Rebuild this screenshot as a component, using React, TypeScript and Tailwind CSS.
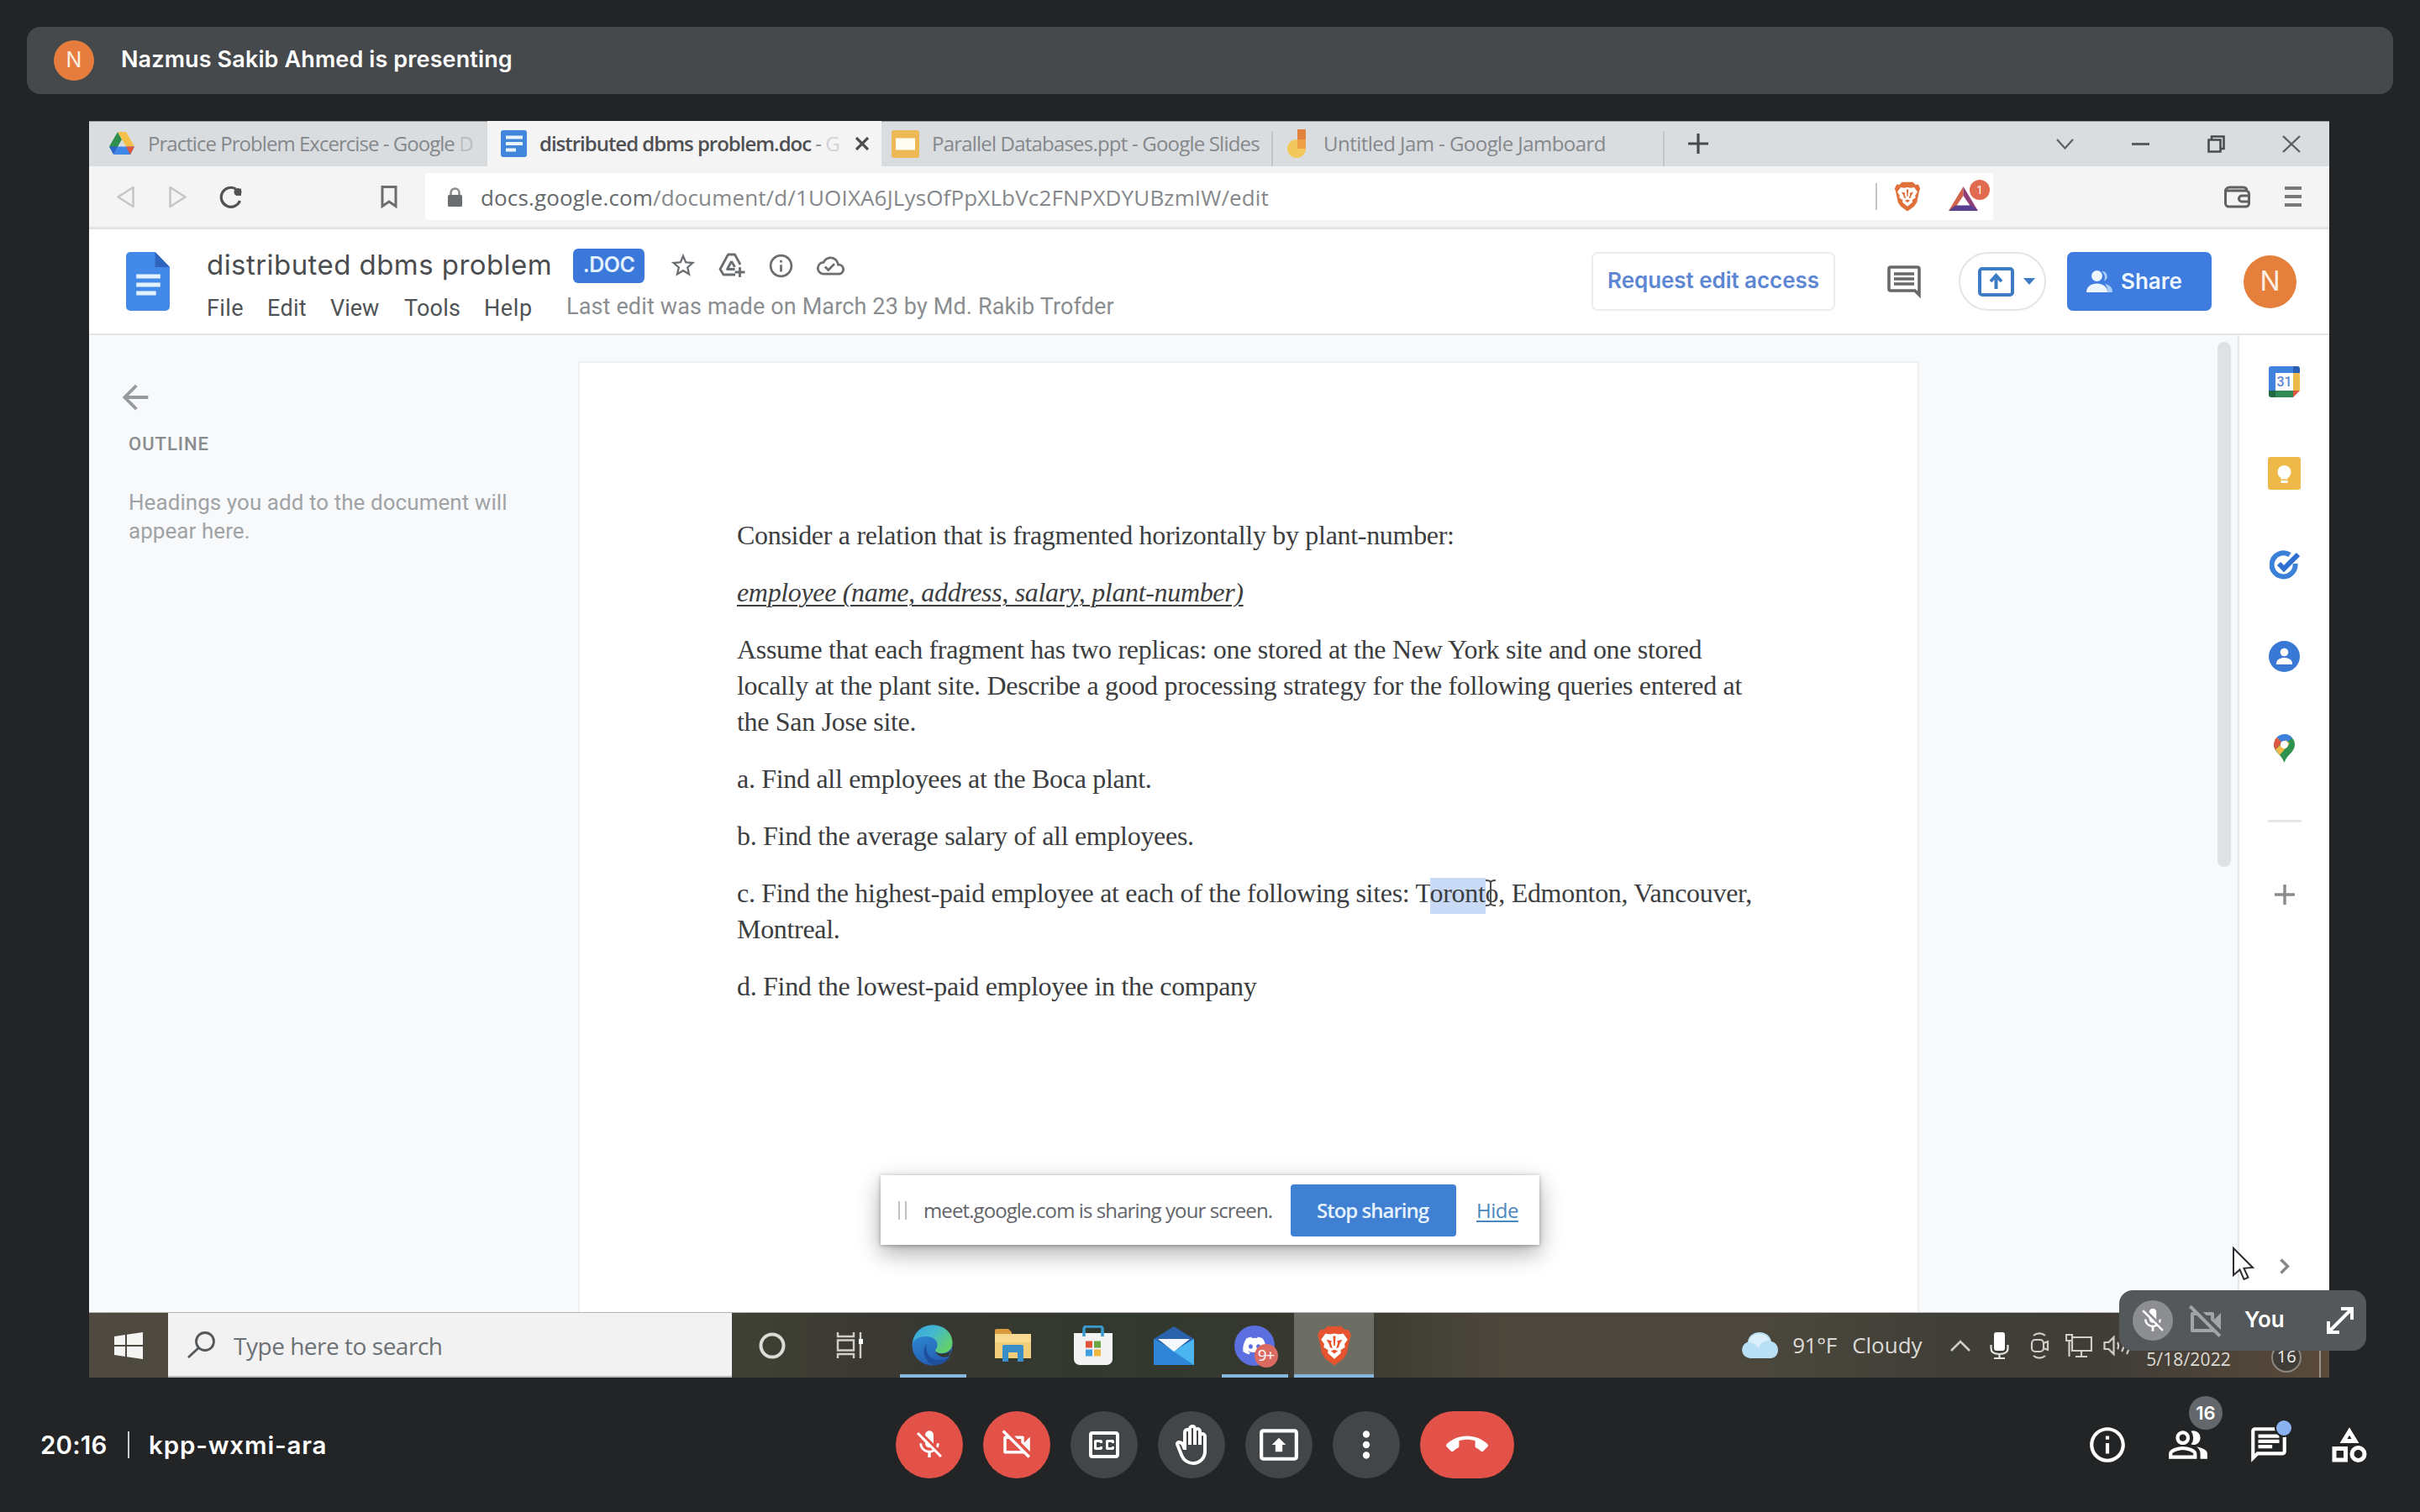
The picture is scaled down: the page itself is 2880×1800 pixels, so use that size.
import React from 'react';
import {
  MdMicOff,
  MdOutlineVideocamOff,
  MdOutlineClosedCaption,
  MdOutlineBackHand,
  MdOutlinePresentToAll,
  MdMoreVert,
  MdCallEnd,
  MdInfoOutline,
  MdOutlinePeopleAlt,
  MdOutlineChat,
  MdStarBorder,
  MdOutlineCloudDone,
  MdArrowBack,
} from 'react-icons/md';
import { FaDiscord } from 'react-icons/fa';

/* ---------- drawings ---------- */

function BraveLion({ className, color }: { className: string; color: string }) {
  return (
    <svg className={className} viewBox="0 0 40 46" preserveAspectRatio="none">
      <path fill={color} d="M12 1h16l4 4 4-.5L39 11l-1.500 4L34 32l-4 6-10 7.500L10 38l-4-6L2.500 15 1 11l3-6.500L8 5z" />
      <path fill="#fff" d="M20 9l5 1 5-1 5 7-3.500 5 .5 4-5 3 .5 3.500L20 38l-7.500-6.500.5-3.500-5-3 .5-4L5 16l5-7 5 1z" />
      <path fill={color} d="M11 16l6 1.500-1 2.500 2 6-3-1-1-4zM29 16l-6 1.500 1 2.500-2 6 3-1 1-4zM16 29l4-1.500 4 1.500-4 3zM18.500 12h3l-.8 11h-1.400z" />
    </svg>
  );
}

function DriveLogo() {
  return (
    <svg className="w-[30px] h-[28px]" viewBox="0 0 30 28">
      <path fill="#2f8f4e" d="M10 0l5 9-9.500 17L0 17.500z" />
      <path fill="#f4c04a" d="M10 0h10l10 17.500H20z" />
      <path fill="#3f87e8" d="M5 27l5-9.500h20L25 27z" />
      <path fill="#2c66c8" d="M0 17.500h10L5 27z" />
      <path fill="#e0573e" d="M20 17.500h10L25 27z" />
    </svg>
  );
}

function CalendarLogo() {
  return (
    <div className="relative flex h-[37px] w-[37px] items-center justify-center">
      <svg className="absolute inset-0 h-full w-full" viewBox="0 0 37 37">
        <path fill="#4182dc" d="M3 0h26v8H8v21H0V3a3 3 0 0 1 3-3z" />
        <path fill="#2b5fb4" d="M29 0h5a3 3 0 0 1 3 3v5h-8z" />
        <path fill="#edb84c" d="M29 8h8v21h-8z" />
        <path fill="#2f8a55" d="M8 29h21v8H8z" />
        <path fill="#226b42" d="M0 29h8v8H3a3 3 0 0 1-3-3z" />
        <path fill="#dc5540" d="M29 29h8l-8 8z" />
        <path fill="#fff" d="M8 8h21v21H8z" />
      </svg>
      <span className="relative font-['Roboto',sans-serif] text-[16px] font-medium leading-none text-[#5b86cf]">31</span>
    </div>
  );
}

function KeepLogo() {
  return (
    <svg className="h-[39px] w-[39px]" viewBox="0 0 39 39">
      <rect width="39" height="39" rx="3" fill="#efb949" />
      <circle cx="19.500" cy="18" r="8" fill="#fff" />
      <rect x="15.500" y="24" width="8" height="2.500" fill="#fff" />
      <rect x="15.500" y="28" width="8" height="3" fill="#fff" />
    </svg>
  );
}

function TasksLogo() {
  return (
    <svg className="h-[35px] w-[36px]" viewBox="0 0 36 35" fill="none">
      <path d="M24 5.500A14 14 0 1 0 30.500 16" stroke="#3b80d9" strokeWidth="6" />
      <path d="M11 16l6 6L34 5" stroke="#2f6fd2" strokeWidth="6" />
    </svg>
  );
}

function ContactsLogo() {
  return (
    <svg className="h-[37px] w-[37px]" viewBox="0 0 37 37">
      <circle cx="18.500" cy="18.500" r="18.500" fill="#3a78d6" />
      <circle cx="18.500" cy="13.500" r="4.800" fill="#fff" />
      <path fill="#fff" d="M9 27c0-5 5-7 9.500-7s9.500 2 9.500 7v1H9z" />
    </svg>
  );
}

function MapsLogo() {
  return (
    <svg className="h-[34px] w-[25px]" viewBox="0 0 25 34">
      <path fill="#2f9350" d="M12.500 0A12.500 12.500 0 0 1 25 12.500C25 21 16 24 12.500 34 9 24 0 21 0 12.500z" />
      <path fill="#3f80dd" d="M12.500 12.500L3.500 3.800A12.500 12.500 0 0 1 22 4.500z" />
      <path fill="#dd5843" d="M3.500 3.800l6 6-7.500 9A12 12 0 0 1 3.500 3.800z" />
      <path fill="#efb949" d="M2 18.500L14 7l5 4L7 25z" />
      <circle cx="12.500" cy="12.500" r="4.600" fill="#fff" />
    </svg>
  );
}

function DocFile() {
  return (
    <svg className="h-[70px] w-[52px]" viewBox="0 0 51 70" preserveAspectRatio="none">
      <path fill="#4289e8" d="M5 0h29l17 18v47a5 5 0 0 1-5 5H5a5 5 0 0 1-5-5V5a5 5 0 0 1 5-5z" />
      <path fill="#2f64bd" d="M34 0l17 18H34z" />
      <path fill="#e4f1fe" d="M12 26.500h28v5H12zM12 36.500h28v5H12zM12 46.500h23v5H12z" />
    </svg>
  );
}

function EdgeLogo() {
  return (
    <svg className="h-[49px] w-[49px]" viewBox="0 0 49 49">
      <defs>
        <linearGradient id="edgeTop" x1="0" y1="0" x2="1" y2="0.600">
          <stop offset="0" stopColor="#3aa5dc" />
          <stop offset="0.500" stopColor="#43b8cf" />
          <stop offset="1" stopColor="#63d06a" />
        </linearGradient>
        <linearGradient id="edgeLow" x1="0" y1="0" x2="0.300" y2="1">
          <stop offset="0" stopColor="#2f93d8" />
          <stop offset="1" stopColor="#2660b4" />
        </linearGradient>
      </defs>
      <circle cx="24.500" cy="24.500" r="24" fill="url(#edgeLow)" />
      <path fill="url(#edgeTop)" d="M1 22C3 8 13 .5 25 .5 39 .5 48.500 10 48.500 21.500 48.500 30 42 34 36 34c-5 0-8-1.500-8-3 0-1.500 2.500-3 2.500-7 0-6-6-10-13-10C9 14 3 17 1 22z" />
      <path fill="#1f4f9c" d="M18 22c-3 8 2 20 14 20 5 0 9-1 13-3-4 6-11 9.500-18 9.500C16 45 11 31 18 22z" />
      <path fill="#35382f" d="M28 31c2 3 6 4 10 3.500 4-.5 7-2 9-5-1 4-2 6-4 8.500-6 2-13-1-15-7z" />
    </svg>
  );
}

function FolderIcon() {
  return (
    <svg className="h-[39px] w-[43px]" viewBox="0 0 43 39">
      <path fill="#d99a3c" d="M0 2a2 2 0 0 1 2-2h14l4 4v6H0z" />
      <path fill="#f3ce7a" d="M0 6h43v29H0z" />
      <path fill="#f8d98f" d="M0 6h43v10H0z" />
      <path fill="#3b8fc9" d="M9 39V21a2 2 0 0 1 2-2h21a2 2 0 0 1 2 2v18h-7V28H16v11z" />
    </svg>
  );
}

function StoreIcon() {
  return (
    <svg className="h-[47px] w-[46px]" viewBox="0 0 46 47">
      <path d="M12 13V4a3 3 0 0 1 3-3h16a3 3 0 0 1 3 3v9" fill="none" stroke="#3a9ad0" strokeWidth="3.500" />
      <path fill="#f3f3f3" d="M0 9h46v31a7 7 0 0 1-7 7H7a7 7 0 0 1-7-7z" />
      <path d="M12 7v6M34 7v6" stroke="#3a9ad0" strokeWidth="3.500" />
      <path fill="#e0553a" d="M14 18.500h8v8h-8z" />
      <path fill="#6ba844" d="M24 18.500h8v8h-8z" />
      <path fill="#3f9ee0" d="M14 28.500h8v8h-8z" />
      <path fill="#efb73e" d="M24 28.500h8v8h-8z" />
    </svg>
  );
}

function MailIcon() {
  return (
    <svg className="h-[46px] w-[48px]" viewBox="0 0 48 46">
      <path fill="#2a62ac" d="M0 15L24 0l24 15v10H0z" />
      <path fill="#3ea0e4" d="M0 15l24 14 24-14v31H0z" />
      <path fill="#2f86d6" d="M0 15l48 31H0z" />
      <path fill="#4ab5ee" d="M48 15L24 29.500 48 46z" />
      <path fill="#f4f8fc" d="M5 15h38L24 30z" />
    </svg>
  );
}

/* ---------- shared browser window ---------- */

function TabStrip() {
  return (
    <div className="flex h-[54px] items-center border-t border-[#9a9c9e] bg-[#dadde0] pb-px font-['Open_Sans','Noto_Sans',sans-serif] text-[24px] leading-[30px] text-[#85888c]">
      <div className="flex h-[54px] w-[474px] items-center pl-6">
        <DriveLogo />
        <div className="ml-4 whitespace-pre tracking-[-0.960px]">
          Practice Problem Excercise - Google <span className="text-[#bbbec1]">D</span>
        </div>
      </div>
      <div className="flex h-[54px] w-[469px] items-center bg-[#f4f4f5] pl-4 text-[#4e5053]">
        <svg className="h-8 w-[31px]" viewBox="0 0 31 32">
          <rect width="31" height="32" rx="3" fill="#4287dc" />
          <path fill="#eaf4ff" d="M6 6.500h20v4H6zM6 14h20v4H6zM6 21.500h12v4H6z" />
        </svg>
        <div className="ml-[15px] w-[361px] whitespace-pre tracking-[-1.020px]">
          <span className="font-semibold">distributed dbms problem.doc</span> <span className="text-[#85888c]">-</span>{' '}
          <span className="text-[#d0d2d4]">G</span>
        </div>
        <svg className="ml-[15px] h-4 w-4" viewBox="0 0 16 16" stroke="#4a4c4e" strokeWidth="3.200">
          <path d="M1 1l14 14M15 1L1 15" />
        </svg>
      </div>
      <div className="flex h-full w-[466px] items-center pl-3">
        <svg className="h-[33px] w-[33px]" viewBox="0 0 33 33">
          <rect width="33" height="33" rx="3" fill="#ecb955" />
          <path fill="#fffdf2" d="M5 9.500h23v14H5z" />
        </svg>
        <div className="ml-[15px] whitespace-pre tracking-[-0.800px]">Parallel Databases.ppt - Google Slides</div>
        <div className="ml-auto mt-3 h-[42px] w-0.5 bg-[#c3c6c9]" />
      </div>
      <div className="flex h-full w-[466px] items-center pl-[17px]">
        <svg className="h-[34px] w-6" viewBox="0 0 24 34">
          <circle cx="11" cy="23" r="11" fill="#f2c75c" />
          <path fill="#e3823f" d="M12 0h10v22H12z" />
          <path fill="#ee9f48" d="M12 12h10v11H12z" />
        </svg>
        <div className="ml-[19px] whitespace-pre tracking-[-0.540px]">Untitled Jam - Google Jamboard</div>
        <div className="ml-auto mt-3 h-[42px] w-0.5 bg-[#c3c6c9]" />
      </div>
      <svg className="ml-7 h-6 w-6" viewBox="0 0 24 24" stroke="#47494b" strokeWidth="3.200">
        <path d="M12 0v24M0 12h24" />
      </svg>
      <div className="ml-auto mr-[34px] flex items-center">
        <svg className="h-[13px] w-[21px]" viewBox="0 0 21 13" fill="none" stroke="#5c5f61" strokeWidth="2.200">
          <path d="M1 1l9.500 10.500L20 1" />
        </svg>
        <div className="ml-[69px] h-[3px] w-[21px] bg-[#5c5f61]" />
        <svg className="ml-[69px] h-[21px] w-[21px]" viewBox="0 0 21 21" fill="none" stroke="#4a4c4e" strokeWidth="2.600">
          <path d="M1.500 5.500h14v14h-14zM5 5V1.500h14.500V16H16" />
        </svg>
        <svg className="ml-[68px] h-[21px] w-[22px]" viewBox="0 0 22 21" stroke="#5c5f61" strokeWidth="2.400">
          <path d="M1 1l20 19M21 1L1 20" />
        </svg>
      </div>
    </div>
  );
}

function AddressBar() {
  return (
    <div className="flex h-[75px] items-center border-b-[3px] border-[#e3e3e5] bg-[#f4f4f5] pl-[33px]">
      <svg className="h-[27px] w-[21px]" viewBox="0 0 21 27" fill="none" stroke="#c4c6c8" strokeWidth="2.600" strokeLinejoin="round">
        <path d="M19.500 2v23L1.500 13.500z" />
      </svg>
      <svg className="ml-[41px] h-[27px] w-[21px]" viewBox="0 0 21 27" fill="none" stroke="#c4c6c8" strokeWidth="2.600" strokeLinejoin="round">
        <path d="M1.500 2v23l18-11.500z" />
      </svg>
      <svg className="ml-[39px] h-[27px] w-[27px]" viewBox="0 0 27 27" fill="none" stroke="#505254" strokeWidth="3.200">
        <path d="M19.500 3.800A11.500 11.500 0 1 0 24.500 18" />
        <path d="M26 3v9l-8-1z" fill="#505254" stroke="none" />
        <circle cx="22" cy="7.500" r="4.500" fill="#505254" stroke="none" />
      </svg>
      <svg className="ml-[165px] h-[27px] w-5" viewBox="0 0 20 27" fill="none" stroke="#6a6c6e" strokeWidth="3">
        <path d="M2 1.500h16v23L10 19l-8 5.500z" />
      </svg>
      <div className="ml-[33px] flex h-14 w-[1866px] items-center rounded-[4px] bg-white pl-[27px]">
        <svg className="h-[23px] w-[17px]" viewBox="0 0 17 23">
          <path fill="none" stroke="#8b8d8f" strokeWidth="2.600" d="M3.500 10V6.500a5 5 0 0 1 10 0V10" />
          <rect y="9" width="17" height="14" rx="1.500" fill="#6b6e70" />
        </svg>
        <div className="ml-[22px] whitespace-pre pt-0.5 font-['Open_Sans','Noto_Sans',sans-serif] text-[26px] leading-8 tracking-[0.140px] text-[#85888b]">
          <span className="text-[#66696c]">docs.google.com</span>/document/d/1UOIXA6JLysOfPpXLbVc2FNPXDYUBzmIW/edit
        </div>
        <div className="ml-auto h-8 w-0.5 bg-[#c2c4c6]" />
        <BraveLion className="ml-[20px] h-9 w-[32px]" color="#e0703a" />
        <div className="relative ml-[33px] mr-[18px] h-[31px] w-[35px] pt-[3px]">
          <svg className="h-[29px] w-[35px]" viewBox="0 0 35 29">
            <path fill="#d2634b" d="M17.500 0L0 29l8-4 9.500-14z" />
            <path fill="#8f3f78" d="M17.500 0L35 29l-8-4-9.500-14z" />
            <path fill="#59408f" d="M0 29h35l-8-6.500H8z" />
          </svg>
          <div className="absolute -right-[14px] -top-[5px] flex h-6 w-6 items-center justify-center rounded-full bg-[#e26a50] font-['Open_Sans',sans-serif] text-[15px] text-white">
            1
          </div>
        </div>
      </div>
      <svg className="ml-[275px] h-[27px] w-[31px]" viewBox="0 0 31 27" fill="none" stroke="#5f6163" strokeWidth="3">
        <path d="M1.500 6v15a4 4 0 0 0 4 4h20a4 4 0 0 0 4-4V10a4 4 0 0 0-4-4h-22zM2 6a4 4 0 0 1 4-4h17a4 4 0 0 1 4 4M29 12h-8a3.500 3.500 0 0 0 0 7h8" />
      </svg>
      <div className="ml-[41px] flex w-5 flex-col gap-[6px]">
        <div className="h-1 bg-[#77797b]" />
        <div className="h-1 bg-[#77797b]" />
        <div className="h-1 bg-[#77797b]" />
      </div>
    </div>
  );
}

function DocsHeader() {
  return (
    <div className="flex h-[126px] border-b-2 border-[#e3e4e6] bg-white pl-11">
      <div className="mt-[27px]">
        <DocFile />
      </div>
      <div className="ml-[44px] flex flex-col pt-[18px]">
        <div className="flex h-[50px] items-center text-[#6b6e71]">
          <div className="w-[410px] whitespace-pre pb-[3px] font-['Inter',sans-serif] text-[33px] leading-10 tracking-[0.440px] text-[#4a4c4f]">
            distributed dbms problem
          </div>
          <div className="ml-[26px] flex h-[41px] w-[85px] items-center justify-center rounded-[6px] bg-[#3b78da] font-['Inter',sans-serif] text-[25px] font-semibold tracking-[-0.500px] text-[#e4f2ff]">
            .DOC
          </div>
          <MdStarBorder className="ml-[29px] h-[34px] w-[34px]" />
          <svg className="ml-[25px] h-[30px] w-[32px]" viewBox="0 0 32 30" fill="none" stroke="#6b6e71" strokeWidth="2.800" strokeLinejoin="round">
            <path d="M20 26H6l-4-6.500L11.500 2h8l6.500 12" />
            <path d="M15.500 10l-5 9.500h9" />
            <path d="M15.500 10l4 7" />
            <path d="M25.500 17v12M19.500 23h12" />
          </svg>
          <MdInfoOutline className="ml-[26px] h-[33px] w-[33px]" />
          <MdOutlineCloudDone className="ml-[26px] h-[33px] w-[33px]" />
        </div>
        <div className="flex h-[50px] items-center whitespace-pre pt-px font-['Roboto',sans-serif] text-[27px] leading-8 text-[#505356]">
          <div className="w-[72px] tracking-[0.400px]">File</div>
          <div className="w-[75px] tracking-[0.300px]">Edit</div>
          <div className="w-[88px]">View</div>
          <div className="w-[95px] tracking-[0.200px]">Tools</div>
          <div className="w-[98px] tracking-[0.600px]">Help</div>
          <div className="pb-[3px] tracking-[0.140px] text-[#8b8e91]">Last edit was made on March 23 by Md. Rakib Trofder</div>
        </div>
      </div>
      <div className="ml-auto mr-[39px] flex items-center font-['Inter',sans-serif] text-[26px] font-medium">
        <div className="flex h-[70px] w-[290px] items-center justify-center whitespace-nowrap rounded-[7px] border-2 border-[#eceded] pb-[3px] font-semibold tracking-[-0.050px] text-[#5d86d3]">
          Request edit access
        </div>
        <svg className="ml-[62px] h-[39px] w-[40px]" viewBox="0 0 40 39" fill="none" stroke="#66686a" strokeWidth="3.600">
          <path d="M4 2h32a2 2 0 0 1 2 2v31l-5-5H4a2 2 0 0 1-2-2V4a2 2 0 0 1 2-2z" />
          <path d="M8 10h24M8 16h24M8 22h24" />
        </svg>
        <div className="ml-[45px] flex h-[70px] w-[104px] items-center rounded-full border-2 border-[#e4e5e7] pl-[21px]">
          <svg className="h-[35px] w-[43px]" viewBox="0 0 43 35" fill="none" stroke="#3d7bc4" strokeWidth="4">
            <rect x="2" y="2" width="39" height="31" rx="3" />
            <path d="M21.500 26V13M15 17l6.500-7 6.500 7" />
          </svg>
          <svg className="ml-[11px] h-2 w-[14px]" viewBox="0 0 14 8" fill="#3d7bc4">
            <path d="M0 0h14L7 8z" />
          </svg>
        </div>
        <div className="ml-[25px] flex h-[70px] w-[172px] items-center rounded-[7px] bg-[#3f7ce0] pl-[23px] text-[#eef6ff]">
          <svg className="h-[27px] w-8" viewBox="0 0 32 27">
            <path fill="#a9cdf8" d="M18 1a6 6 0 0 1 3 11.500A9 9 0 0 0 18 1zM22 16c6 1.500 9 4 9 10h-6c0-5-1-8-3-10z" />
            <circle cx="12.500" cy="6.500" r="6.500" fill="#eef6ff" />
            <path fill="#eef6ff" d="M0 26c0-7 6-10.500 12.500-10.500S25 19 25 26z" />
          </svg>
          <span className="ml-[9px] pb-0.5 font-semibold">Share</span>
        </div>
        <div className="ml-[38px] flex h-[63px] w-[63px] items-center justify-center rounded-full bg-[#e47f3c] text-[32px] font-normal text-[#fdeee2]">N</div>
      </div>
    </div>
  );
}

function DocumentBody() {
  return (
    <div className="flex h-[1163px] bg-[#f8f9fb]">
      <div className="w-[582px] shrink-0 pl-[47px] pt-[51px] font-['Roboto',sans-serif]">
        <MdArrowBack className="-ml-[15px] h-[46px] w-[46px] text-[#97999c]" />
        <div className="mt-[21px] text-[22px] font-medium leading-6 tracking-[0.980px] text-[#8a8d90]">OUTLINE</div>
        <div className="mt-[41px] whitespace-pre text-[26px] leading-[33.500px] tracking-[0.060px] text-[#a0a3a6]">
          Headings you add to the document will
          <br />
          appear here.
        </div>
      </div>

      <div className="relative mt-[31px] w-[1596px] shrink-0 border-2 border-b-0 border-[#eeeff1] bg-white pl-[187px] pt-[184px] font-['Liberation_Serif',serif] text-[32px] leading-[43px] tracking-[-0.305px] text-[#3c3d3f]">
        <div className="flex flex-col gap-[25px] whitespace-pre">
          <p>Consider a relation that is fragmented horizontally by plant-number:</p>
          <p className="italic tracking-[-0.340px] underline decoration-2 underline-offset-[4px]">employee (name, address, salary, plant-number)</p>
          <p>
            Assume that each fragment has two replicas: one stored at the New York site and one stored
            <br />
            locally at the plant site. Describe a good processing strategy for the following queries entered at
            <br />
            the San Jose site.
          </p>
          <p>a. Find all employees at the Boca plant.</p>
          <p>b. Find the average salary of all employees.</p>
          <p>
            c. Find the highest-paid employee at each of the following sites: T
            <span className="bg-[#c8daf5] pb-[7px]">oront</span>o, Edmonton, Vancouver,
            <br />
            Montreal.
          </p>
          <p>d. Find the lowest-paid employee in the company</p>
        </div>
        <svg className="absolute left-[1076px] top-[615px] h-8 w-4" viewBox="0 0 16 32" fill="none" stroke="#4a4b4d" strokeWidth="2">
          <path d="M2 1c4 0 6 1 6 3 0-2 2-3 6-3M8 4v24M2 31c4 0 6-1 6-3 0 2 2 3 6 3" />
        </svg>
      </div>

      <div className="flex flex-1 justify-end pr-2 pt-2">
        <div className="h-[625px] w-4 rounded-full bg-[#dfe1e3]" />
      </div>

      <div className="flex w-[109px] shrink-0 flex-col items-center border-l-2 border-[#e6e7e9] bg-white pt-px">
        <div className="flex h-[109px] items-center"><CalendarLogo /></div>
        <div className="flex h-[109px] items-center"><KeepLogo /></div>
        <div className="flex h-[109px] items-center"><TasksLogo /></div>
        <div className="flex h-[109px] items-center"><ContactsLogo /></div>
        <div className="flex h-[109px] items-center"><MapsLogo /></div>
        <div className="mt-[31px] h-[3px] w-10 bg-[#e5e6e8]" />
        <svg className="mt-[74px] h-6 w-6" viewBox="0 0 24 24" stroke="#8a8c8e" strokeWidth="3.500">
          <path d="M12 0v24M0 12h24" />
        </svg>
        <svg className="mt-[421px] h-[19px] w-3" viewBox="0 0 12 19" fill="none" stroke="#85878a" strokeWidth="3.400">
          <path d="M1.500 1.500l8 8-8 8" />
        </svg>
      </div>
    </div>
  );
}

function SharingNotice() {
  return (
    <div className="absolute left-[942px] top-[1255px] flex h-[83px] w-[784px] items-center bg-white pl-[21px] font-['Open_Sans','Noto_Sans',sans-serif] text-[24px] shadow-[0_10px_28px_rgba(0,0,0,0.32),0_1px_5px_rgba(0,0,0,0.3)]">
      <div className="h-[22px] w-[10px] border-x-2 border-[#bfc1c3]" />
      <div className="ml-5 w-[416px] whitespace-nowrap tracking-[-0.900px] text-[#63656a]">meet.google.com is sharing your screen.</div>
      <div className="ml-[21px] flex h-[62px] w-[197px] items-center justify-center whitespace-nowrap rounded-[4px] bg-[#4080d2] pr-0.5 font-semibold tracking-[-1px] text-[#e6f3ff]">
        Stop sharing
      </div>
      <div className="ml-[24px] tracking-[-0.500px] text-[#4a86bd] underline decoration-2 underline-offset-[3px]">Hide</div>
    </div>
  );
}

/* ---------- Windows taskbar ---------- */

function Tile({ children, bar }: { children: React.ReactNode; bar?: boolean }) {
  return (
    <div className="relative flex h-full w-[95.600px] items-center justify-center">
      {children}
      {bar && <div className="absolute bottom-0 left-[9px] h-1 w-[79px] bg-[#86b7de]" />}
    </div>
  );
}

function Taskbar() {
  return (
    <div className="flex h-[78px] items-center border-t border-[#b4b3ae] bg-[linear-gradient(90deg,#4f4a3f_0%,#494639_20%,#3f4034_30%,#3a3833_35%,#32392e_46%,#38382f_55%,#4c473b_63%,#4b473c_75%,#403f38_83%,#403d38_90%,#5a4a3a_100%)] font-['Open_Sans','Noto_Sans',sans-serif] text-[#dcdbd7]">
      <div className="flex h-full w-[94px] items-center justify-center">
        <svg className="h-[32px] w-[34px]" viewBox="0 0 34 32" fill="#f4f4f2">
          <path d="M0 5l13-2v12H0zM15 2.700L34 0v15H15zM0 17h13v12L0 27zM15 17h19v15l-19-2.700z" />
        </svg>
      </div>
      <div className="flex h-full w-[671px] items-center border-b-2 border-[#b9b9b7] bg-[#f2f2f3] pl-[23px]">
        <svg className="h-8 w-[33px]" viewBox="0 0 33 32" fill="none" stroke="#55585a" strokeWidth="2.800">
          <circle cx="21" cy="12" r="10.500" />
          <path d="M13.500 19.500L1 31" />
        </svg>
        <div className="ml-[22px] whitespace-nowrap pt-0.5 text-[28px] tracking-[-0.480px] text-[#6c7175]">Type here to search</div>
      </div>
      <Tile>
        <svg className="h-8 w-8" viewBox="0 0 32 32" fill="none" stroke="#dcdbd6" strokeWidth="4">
          <circle cx="16" cy="16" r="13.500" />
        </svg>
      </Tile>
      <Tile>
        <svg className="mr-[5px] h-[31px] w-[33px]" viewBox="0 0 33 31" fill="none" stroke="#cfcec9" strokeWidth="2.400">
          <path d="M2 0v5h19V0M2 31v-5h19v5M2 9.500h19v12H2zM29 0v31" />
          <path d="M27 8h5v6h-5z" fill="#fff" stroke="none" />
        </svg>
      </Tile>
      <Tile bar><EdgeLogo /></Tile>
      <Tile><FolderIcon /></Tile>
      <Tile><StoreIcon /></Tile>
      <Tile><MailIcon /></Tile>
      <Tile bar>
        <div className="ml-0.5 flex h-12 w-12 items-center justify-center rounded-full bg-[#5b6fe0]">
          <FaDiscord className="h-[28px] w-[30px] text-white" />
        </div>
        <div className="absolute left-[48px] top-[37px] flex h-7 w-7 items-center justify-center rounded-full bg-[#db6a62] pb-0.5 text-[19px] tracking-[-1px] text-white">
          9+
        </div>
      </Tile>
      <div className="flex h-full w-[95px] items-center justify-center border-b-4 border-[#86b7de] bg-[#6c6d65] pt-1">
        <BraveLion className="h-[48px] w-[42px]" color="#e5542e" />
      </div>

      <svg className="ml-[438px] h-[31px] w-[43px]" viewBox="0 0 43 31">
        <path fill="#b9dff5" d="M10 31a10 10 0 0 1-3-19.500C8 4 14 0 21 0c8 0 13 5 14 11 5 1 8 5 8 10 0 6-4 10-9 10z" />
        <path fill="#dcf0fb" d="M8 12C9 5 15 2 21 2c6 0 10 3 12 8-8 0-12 4-13 9-3-5-8-7-12-7z" />
      </svg>
      <div className="ml-[17px] w-[71px] whitespace-nowrap text-[26px] tracking-[-0.400px]">91°F</div>
      <div className="w-[85px] whitespace-nowrap text-[26px]">Cloudy</div>
      <svg className="ml-[32px] mr-[23px] h-[14px] w-6" viewBox="0 0 24 14" fill="none" stroke="#cfcec9" strokeWidth="2.600">
        <path d="M1 13L12 2l11 11" />
      </svg>
      <svg className="h-8 w-[23px]" viewBox="0 0 23 32" fill="none" stroke="#e6e5e1" strokeWidth="2.200">
        <rect x="5" y="0" width="13" height="22" rx="3" fill="#fff" stroke="none" />
        <path d="M1.500 15v4c0 5 4 7 10 7s10-2 10-7v-4M11.500 26v5M5 31h13" />
      </svg>
      <svg className="ml-[25px] h-8 w-[23px]" viewBox="0 0 23 32" fill="none" stroke="#cfcec9" strokeWidth="2.200">
        <path d="M4 4c4-3.500 10-3.500 14 0M4 28c4 3.500 10 3.500 14 0" />
        <rect x="2" y="9" width="14" height="14" rx="4" />
        <path d="M16 13l5-2v10l-5-2" />
      </svg>
      <svg className="ml-[19px] h-7 w-8" viewBox="0 0 32 28" fill="none" stroke="#cfcec9" strokeWidth="2.200">
        <path d="M9 4h22v16H8V9M12 27h14M19 20v7M1 1h7v7H1zM4.500 8v19" />
      </svg>
      <svg className="ml-[13px] h-[26px] w-[33px]" viewBox="0 0 33 26" fill="none" stroke="#cfcec9" strokeWidth="2.200">
        <path d="M1.500 9v8h5l6 6V3l-6 6zM17 9c1.500 2 1.500 6 0 8M22 6c3 4 3 10 0 14M28 3c3.500 6 3.500 14 0 20" />
      </svg>
      <div className="ml-[18px] mb-[10px] w-[102px] self-end whitespace-nowrap text-[21px] leading-6 tracking-[0.150px]">5/18/2022</div>
      <div className="relative ml-[47px] mt-[29px] flex h-9 w-9 items-center justify-center rounded-full border-2 border-[#8c8880] bg-[#403d39] pb-0.5 text-[20px] text-[#efeeec]">
        <div className="absolute -left-[14px] top-[3px] h-[4px] w-5 bg-[#efeeec]" />
        16
      </div>
      <div className="ml-[21px] h-full w-0.5 bg-[#98928a]" />
    </div>
  );
}

/* ---------- Meet chrome ---------- */

function SelfPill() {
  return (
    <div className="absolute left-[2522px] top-[1536px] flex h-[72px] w-[294px] items-center rounded-[16px] bg-[#54585b] pl-4">
      <div className="flex h-12 w-12 items-center justify-center rounded-full bg-[#8c8e92] text-white">
        <MdMicOff className="h-[34px] w-[34px]" />
      </div>
      <MdOutlineVideocamOff className="ml-[15px] mt-[3px] h-[48px] w-[48px] text-[#a2a4a7]" />
      <div className="ml-[22px] pb-[3px] font-['Inter',sans-serif] text-[26px] font-semibold text-white">You</div>
      <svg className="ml-auto mr-[15px] h-8 w-8" viewBox="0 0 32 32" fill="none" stroke="#fff" strokeWidth="4">
        <path d="M4 28L28 4M17 2h13v13M2 17v13h13" />
      </svg>
    </div>
  );
}

function RoundButton({ children }: { children: React.ReactNode }) {
  return <div className="flex h-20 w-20 items-center justify-center rounded-full bg-[#424649] text-white">{children}</div>;
}

function RedButton({ children }: { children: React.ReactNode }) {
  return <div className="flex h-20 w-20 items-center justify-center rounded-full bg-[#e35249] text-white">{children}</div>;
}

function CallControls() {
  return (
    <div className="flex h-[160px] items-center text-white">
      <div className="flex w-[1066px] items-center pb-px pl-12 font-['Inter',sans-serif] text-[29.500px] font-semibold leading-9">
        <div className="w-[104px] tracking-[0.200px]">20:16</div>
        <div className="h-8 w-0.5 bg-[#c9cacb]" />
        <div className="ml-[23px] tracking-[0.850px]">kpp-wxmi-ara</div>
      </div>
      <div className="flex items-center gap-6">
        <RedButton><MdMicOff className="h-10 w-10" /></RedButton>
        <RedButton><MdOutlineVideocamOff className="h-[42px] w-[42px]" /></RedButton>
        <RoundButton><MdOutlineClosedCaption className="h-12 w-12" /></RoundButton>
        <RoundButton><MdOutlineBackHand className="h-12 w-12" /></RoundButton>
        <RoundButton><MdOutlinePresentToAll className="h-[50px] w-[50px]" /></RoundButton>
        <RoundButton><MdMoreVert className="h-[50px] w-[50px]" /></RoundButton>
        <div className="flex h-20 w-28 items-center justify-center rounded-full bg-[#e35249]">
          <MdCallEnd className="h-[50px] w-[50px]" />
        </div>
      </div>
      <div className="ml-auto flex items-center pr-[36px]">
        <div className="flex w-24 justify-center"><MdInfoOutline className="h-[50px] w-[50px]" /></div>
        <div className="relative flex w-24 justify-center">
          <MdOutlinePeopleAlt className="h-[50px] w-[50px]" />
          <div className="absolute left-[49px] -top-[33px] flex h-10 w-10 items-center justify-center rounded-full bg-[#63676b] font-['Inter',sans-serif] text-[22px] font-semibold">
            16
          </div>
        </div>
        <div className="relative flex w-24 justify-center">
          <MdOutlineChat className="h-[50px] w-[50px]" />
          <div className="absolute left-[57px] -top-[4px] h-[18px] w-[18px] rounded-full bg-[#8ab1f0] ring-2 ring-[#222426]" />
        </div>
        <div className="flex w-24 justify-center">
          <svg className="h-[42px] w-[42px]" viewBox="0 0 42 42" fill="none" stroke="#fff" strokeWidth="5">
            <path d="M21 5l7 11.500H14z" />
            <path d="M3 25.500h13.500V39H3z" />
            <circle cx="31.500" cy="32" r="7.500" />
          </svg>
        </div>
      </div>
    </div>
  );
}

export default function App() {
  return (
    <div className="relative flex h-[1800px] w-[2880px] flex-col overflow-hidden bg-[#222426]">
      <div className="mx-8 mt-8 flex h-20 items-center rounded-[16px] bg-[#46494c] pl-8 font-['Inter',sans-serif]">
        <div className="flex h-12 w-12 items-center justify-center rounded-full bg-[#e67c3e] text-[25px] text-[#fdeee2]">N</div>
        <div className="ml-8 pb-[3px] text-[27px] font-semibold leading-8 tracking-[0.120px] text-white">Nazmus Sakib Ahmed is presenting</div>
      </div>
      <div className="relative ml-[106px] mt-8 flex h-[1496px] w-[2666px] flex-col">
        <TabStrip />
        <AddressBar />
        <DocsHeader />
        <DocumentBody />
        <Taskbar />
        <SharingNotice />
        <svg className="absolute left-[2550px] top-[1339px] h-[42px] w-[28px]" viewBox="0 0 28 42" fill="#fff" stroke="#2c2d30" strokeWidth="2">
          <path d="M2 3v32l7.500-6.500 5 11.500 5-2.200-5-11L25 26z" />
        </svg>
      </div>
      <CallControls />
      <SelfPill />
    </div>
  );
}
